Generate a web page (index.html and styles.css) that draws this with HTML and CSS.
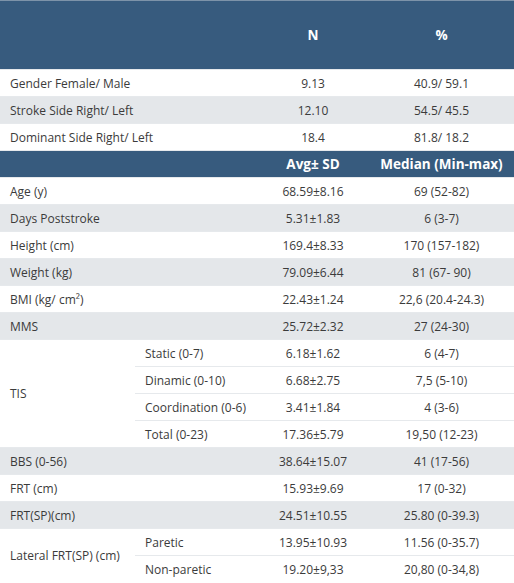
FILE: index.html
```html
<!DOCTYPE html>
<html>
<head>
<meta charset="utf-8">
<link rel="stylesheet" href="styles.css">
</head>
<body>
<table class="data">
  <colgroup>
    <col class="c1"><col class="c2"><col class="c3"><col class="c4">
  </colgroup>
  <tr class="head head-tall">
    <th colspan="2"></th><th>N</th><th>%</th>
  </tr>
  <tr><td colspan="2" class="lab">Gender Female/ Male</td><td>9.13</td><td>40.9/ 59.1</td></tr>
  <tr class="alt"><td colspan="2" class="lab">Stroke Side Right/ Left</td><td>12.10</td><td>54.5/ 45.5</td></tr>
  <tr><td colspan="2" class="lab">Dominant Side Right/ Left</td><td>18.4</td><td>81.8/ 18.2</td></tr>
  <tr class="head">
    <th colspan="2"></th><th>Avg± SD</th><th>Median (Min-max)</th>
  </tr>
  <tr><td colspan="2" class="lab">Age (y)</td><td>68.59±8.16</td><td>69 (52-82)</td></tr>
  <tr class="alt"><td colspan="2" class="lab">Days Poststroke</td><td>5.31±1.83</td><td>6 (3-7)</td></tr>
  <tr><td colspan="2" class="lab">Height (cm)</td><td>169.4±8.33</td><td>170 (157-182)</td></tr>
  <tr class="alt"><td colspan="2" class="lab">Weight (kg)</td><td>79.09±6.44</td><td>81 (67- 90)</td></tr>
  <tr><td colspan="2" class="lab">BMI (kg/ cm²)</td><td>22.43±1.24</td><td>22,6 (20.4-24.3)</td></tr>
  <tr class="alt"><td colspan="2" class="lab">MMS</td><td>25.72±2.32</td><td>27 (24-30)</td></tr>
  <tr><td rowspan="4" class="lab">TIS</td><td class="lab">Static (0-7)</td><td>6.18±1.62</td><td>6 (4-7)</td></tr>
  <tr><td class="lab">Dinamic (0-10)</td><td>6.68±2.75</td><td>7,5 (5-10)</td></tr>
  <tr><td class="lab">Coordination (0-6)</td><td>3.41±1.84</td><td>4 (3-6)</td></tr>
  <tr><td class="lab">Total (0-23)</td><td>17.36±5.79</td><td>19,50 (12-23)</td></tr>
  <tr class="alt"><td colspan="2" class="lab">BBS (0-56)</td><td>38.64±15.07</td><td>41 (17-56)</td></tr>
  <tr><td colspan="2" class="lab">FRT (cm)</td><td>15.93±9.69</td><td>17 (0-32)</td></tr>
  <tr class="alt"><td colspan="2" class="lab">FRT(SP)(cm)</td><td>24.51±10.55</td><td>25.80 (0-39.3)</td></tr>
  <tr><td rowspan="2" class="lab">Lateral FRT(SP) (cm)</td><td class="lab">Paretic</td><td>13.95±10.93</td><td>11.56 (0-35.7)</td></tr>
  <tr><td class="lab">Non-paretic</td><td>19.20±9,33</td><td>20,80 (0-34,8)</td></tr>
</table>
</body>
</html>
```

FILE: styles.css
```css
html, body {
  margin: 0;
  padding: 0;
  background: #ffffff;
}

.data {
  width: 514px;
  border-collapse: collapse;
  table-layout: fixed;
  font-family: "Open Sans", "Noto Sans", sans-serif;
  font-size: 12px;
  color: #3b3b3b;
}

.c1 { width: 135px; }
.c2 { width: 122px; }
.c3 { width: 112px; }
.c4 { width: 145px; }

.data td,
.data th {
  height: 26px;
  padding: 0 9px;
  border-top: 1px solid #e6e9ec;
  text-align: center;
  vertical-align: middle;
  white-space: nowrap;
}

.data td.lab {
  text-align: left;
  padding-left: 10px;
}

.head th {
  background: #375b7e;
  color: #ffffff;
  font-weight: 700;
  font-size: 13.5px;
  border-top: 1px solid #e6e9ec;
}

.head-tall th {
  height: 68px;
  border-top: 1px solid #7d93a9;
}

.alt td {
  background: #e4e7ea;
}
```
